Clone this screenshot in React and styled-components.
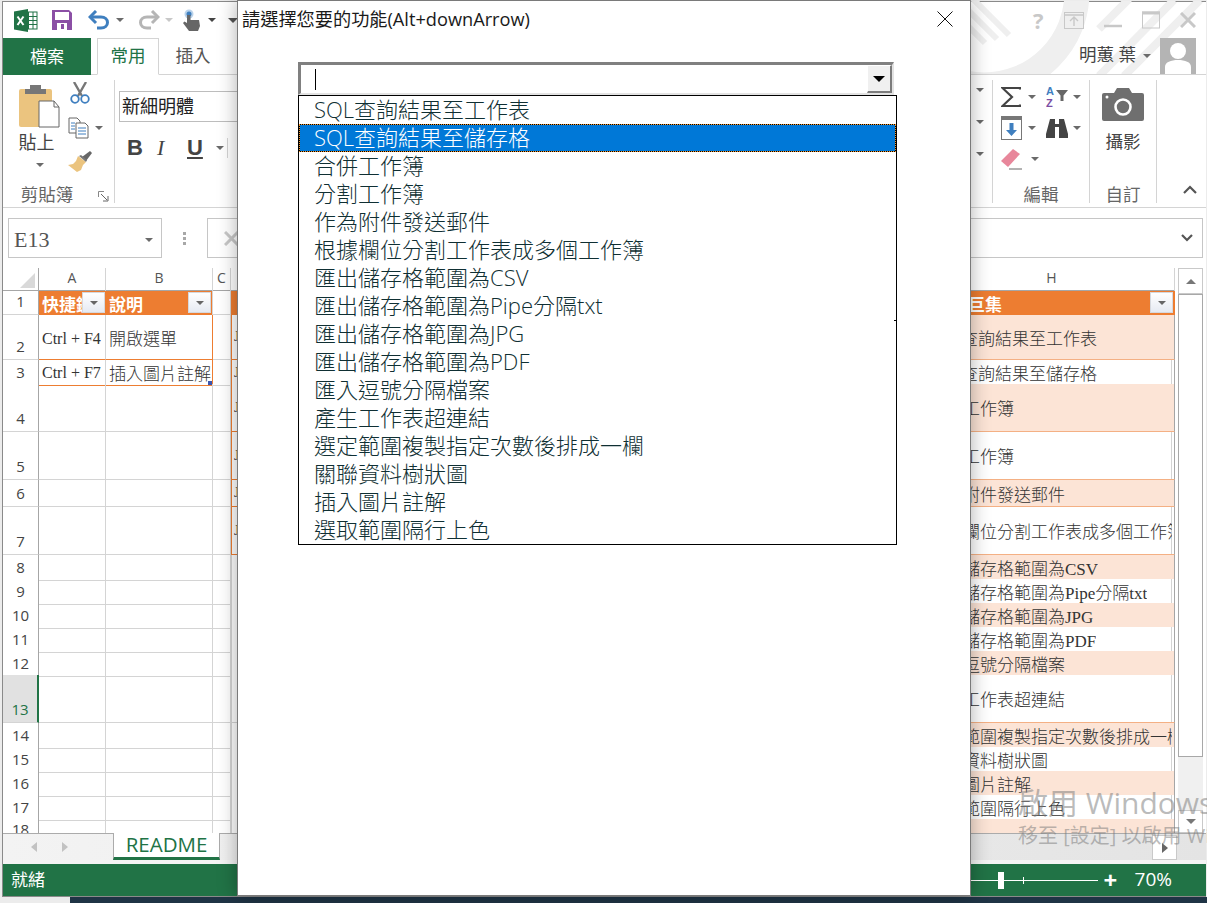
import styled, { createGlobalStyle } from 'styled-components';

const GREEN = '#217346';
const ORANGE = '#ed7d31';
const GRID = '#d4d4d4';
const SANS = '"Open Sans", "Noto Sans CJK TC", sans-serif';
const SERIF = '"Liberation Serif", "Noto Sans CJK TC", serif';

const GlobalStyle = createGlobalStyle`
  html, body { margin: 0; padding: 0; background: #ececec; }
  * { box-sizing: border-box; }
`;

const Page = styled.div`
  position: relative;
  width: 1207px;
  height: 903px;
  overflow: hidden;
  display: flex;
  flex-direction: column;
  font-family: ${SANS};
  background: #ececec;
`;

const Window = styled.div`
  margin: 1px 1px 0 2px;
  height: 896px;
  display: flex;
  flex-direction: column;
  background: #fff;
  border-top: 1px solid #8a8a8a;
  border-left: 1px solid #8a8a8a;
  border-bottom: 1px solid #8a8a8a;
`;

const Taskbar = styled.div`
  flex: 1;
  margin-left: 70px;
  background: #1f3445;
`;

/* title bar */
const TitleBar = styled.div`
  position: relative;
  height: 36px;
  display: flex;
  align-items: center;
  padding-left: 10px;
`;

const QuickItem = styled.span`
  display: inline-flex;
  align-items: center;
  margin-left: ${p => p.$ml || 0}px;
`;

const Stripes = styled.svg`
  position: absolute;
  right: 0;
  top: -1px;
`;

const WinControls = styled.div`
  position: relative;
  margin-left: auto;
  width: 173px;
  display: flex;
  align-items: center;
  justify-content: space-between;
  padding-right: 10px;
`;

const TabRow = styled.div`
  position: relative;
  height: 37px;
  display: flex;
  border-bottom: 1px solid ${GRID};
`;

const FileTab = styled.div`
  width: 88px;
  height: 37px;
  display: flex;
  align-items: center;
  justify-content: center;
  padding-bottom: 3px;
  background: ${GREEN};
  color: #fff;
  font-size: 17px;
`;

const RibbonTab = styled.div`
  height: ${p => (p.$active ? 37 : 36)}px;
  margin-left: ${p => p.$ml}px;
  width: ${p => p.$w}px;
  display: flex;
  align-items: center;
  justify-content: center;
  padding-bottom: 4px;
  font-size: 17.5px;
  color: ${p => (p.$active ? GREEN : '#555')};
  background: #fff;
  border: ${p => (p.$active ? `1px solid ${GRID}` : 'none')};
  border-bottom: ${p => (p.$active ? '1px solid #fff' : 'none')};
`;

const UserBox = styled.div`
  position: relative;
  margin-left: auto;
  display: flex;
  align-items: center;
  gap: 5px;
  padding-right: 10px;
  font-size: 17.500px;
  color: #444;
`;

const UserName = styled.span`
  padding-bottom: 5px;
`;

const Avatar = styled.svg`
  display: block;
  margin-left: 4px;
`;

const Caret = styled.span`
  display: inline-block;
  width: 0;
  height: 0;
  flex: none;
  margin-left: ${p => p.$ml || 0}px;
  border-left: ${p => p.$s || 4}px solid transparent;
  border-right: ${p => p.$s || 4}px solid transparent;
  border-top: ${p => p.$s || 4}px solid ${p => p.$c || '#6a6a6a'};
`;

const UpCaret = styled.span`
  width: 0;
  height: 0;
  border-left: 5px solid transparent;
  border-right: 5px solid transparent;
  border-bottom: 5px solid #777;
`;

/* ribbon */
const Ribbon = styled.div`
  height: 133px;
  display: flex;
  justify-content: space-between;
  padding-top: 5px;
  border-bottom: 1px solid ${GRID};
`;

const RibbonSide = styled.div`
  display: flex;
`;

const Group = styled.div`
  width: ${p => p.$w}px;
  height: 123px;
  display: flex;
  flex-direction: column;
  border-right: ${p => (p.$plain ? 'none' : `1px solid ${GRID}`)};
`;

const GroupBody = styled.div`
  flex: 1;
  display: flex;
`;

const GroupLabel = styled.div`
  height: 22px;
  font-size: 17.500px;
  line-height: 26px;
  color: #666;
  text-align: center;
  position: relative;
`;

const ClipLabel = styled.span`
  margin-right: 23px;
`;

const Launcher = styled.svg`
  position: absolute;
  right: 5px;
  top: 10px;
`;

const PasteCol = styled.div`
  margin: 4px 0 0 16px;
  width: 41px;
  display: flex;
  flex-direction: column;
  align-items: center;
  font-size: 18px;
  color: #444;
`;

const PasteLabel = styled.div`
  margin: 3px 6px 10px 0;
  line-height: 22px;
  white-space: nowrap;
`;

const SmallCol = styled.div`
  margin: 4px 0 0 8px;
  display: flex;
  flex-direction: column;
  gap: 11px;
`;

const SmallRow = styled.div`
  display: flex;
  align-items: center;
  gap: 6px;
  height: 22px;
`;

const CutWrap = styled.span`
  margin-left: 2px;
`;

const FontCol = styled.div`
  width: 100%;
  padding: 11px 0 0 4px;
`;

const FontBox = styled.div`
  width: 125px;
  height: 31px;
  display: flex;
  align-items: center;
  padding: 0 0 3px 2px;
  border: 1px solid #bdbdbd;
  background: #fff;
  font-size: 18px;
  color: #222;
  white-space: nowrap;
`;

const FontTools = styled.div`
  margin: 15px 0 0 8px;
  display: flex;
  align-items: center;
  height: 22px;
`;

const FontBtn = styled.span`
  width: 30px;
  font-size: 22px;
  font-family: ${p => (p.$serif ? '"Liberation Serif", serif' : '"Liberation Sans", sans-serif')};
  font-weight: ${p => (p.$light ? 400 : 700)};
  font-style: ${p => (p.$italic ? 'italic' : 'normal')};
  text-decoration: ${p => (p.$under ? 'underline' : 'none')};
  color: #444;
`;

const FontSep = styled.span`
  margin-left: auto;
  width: 1px;
  height: 20px;
  background: ${GRID};
`;

const CaretCol = styled.div`
  width: 100%;
  padding-top: 8px;
  display: flex;
  flex-direction: column;
  align-items: flex-end;
  gap: 28px;
  padding-right: 8px;
`;

const EditGrid = styled.div`
  padding: 4px 0 0 8px;
  display: grid;
  grid-template-columns: 45px 44px;
  grid-auto-rows: 26px;
  row-gap: 5px;
`;

const EditCell = styled.div`
  display: flex;
  align-items: center;
  gap: 5px;
`;

const CameraCol = styled.div`
  width: 100%;
  padding-top: 8px;
  display: flex;
  flex-direction: column;
  align-items: center;
  gap: 7px;
  font-size: 17.500px;
  color: #444;
`;

const CollapseCell = styled.div`
  margin-top: auto;
  padding: 0 0 4px 26px;
`;

/* formula bar */
const FormulaBar = styled.div`
  height: 60px;
  padding: 10px 3px 10px 5px;
  display: flex;
  align-items: stretch;
`;

const NameBox = styled.div`
  width: 154px;
  display: flex;
  align-items: center;
  justify-content: space-between;
  padding: 3px 8px 0 5px;
  border: 1px solid #c6c6c6;
  font-family: ${SERIF};
  font-size: 22px;
  color: #555;
`;

const Dots = styled.span`
  width: 45px;
  display: flex;
  flex-direction: column;
  align-items: center;
  justify-content: center;
  gap: 2px;
  & > i {
    width: 3px;
    height: 3px;
    background: #a8a8a8;
  }
`;

const FormulaInput = styled.div`
  flex: 1;
  display: flex;
  align-items: center;
  justify-content: space-between;
  padding: 0 9px 0 16px;
  border: 1px solid #c6c6c6;
`;

/* sheet */
const SheetArea = styled.div`
  flex: 1;
  min-height: 0;
  display: flex;
`;

const Sheet = styled.div`
  width: 1172px;
  overflow: hidden;
`;

const COLUMNS = '36px 67px 107px 18px 698px 246px';

const ColHead = styled.div`
  height: 23px;
  display: grid;
  grid-template-columns: ${COLUMNS};
  border-bottom: 1px solid #a6a6a6;
`;

const ColName = styled.div`
  display: flex;
  align-items: center;
  justify-content: center;
  padding-bottom: 4px;
  font-size: 14px;
  color: #555;
  border-right: 1px solid ${GRID};
`;

const Corner = styled(ColName)`
  border-right: 1px solid #a6a6a6;
  justify-content: flex-end;
  padding-right: 3px;
  align-items: flex-end;
  padding-bottom: 3px;
`;

const Row = styled.div`
  display: grid;
  grid-template-columns: ${COLUMNS};
  height: ${p => p.$h}px;
`;

const RowNum = styled.div`
  display: flex;
  align-items: flex-end;
  justify-content: center;
  padding-bottom: 2px;
  font-size: 15px;
  line-height: 21px;
  color: ${p => (p.$active ? GREEN : '#444')};
  background: ${p => (p.$active ? '#e1e1e1' : '#fff')};
  border-bottom: 1px solid ${GRID};
  border-right: ${p => (p.$active ? `2px solid ${GREEN}` : '1px solid #a6a6a6')};
`;

const Cell = styled.div`
  min-width: 0;
  display: flex;
  align-items: center;
  padding: ${p => p.$pt || 0}px 0 0 3px;
  font-family: ${SERIF};
  font-size: ${p => p.$fs || 17}px;
  font-weight: 300;
  color: #333;
  white-space: nowrap;
  border-bottom: 1px solid ${p => (p.$band ? ORANGE : GRID)};
  border-right: 1px solid ${p => (p.$edge ? ORANGE : GRID)};
  position: relative;
`;

const HeadCell = styled.div`
  position: relative;
  min-width: 0;
  display: flex;
  align-items: center;
  padding-left: ${p => p.$pl || 3}px;
  overflow: hidden;
  white-space: nowrap;
  background: ${ORANGE};
  color: #fff;
  font-family: ${SERIF};
  font-size: 17px;
  font-weight: 700;
  border-right: ${p => (p.$gap ? `1px solid ${GRID}` : 'none')};
`;

const FilterBtn = styled.span`
  position: absolute;
  right: ${p => p.$r || 1}px;
  top: 1px;
  width: 23px;
  height: 21px;
  display: flex;
  align-items: center;
  justify-content: center;
  background: linear-gradient(#fff, #e6eaf2);
  border: 1px solid #d5d8de;
`;

const CommentMark = styled.span`
  position: absolute;
  right: 0;
  bottom: 0;
  width: 4px;
  height: 4px;
  background: #3a55b0;
`;

const BandCell = styled.div`
  min-width: 0;
  padding-left: 2px;
  display: flex;
  align-items: center;
  font-family: ${SERIF};
  font-size: 14px;
  color: #333;
  background: #fff;
  border-left: 1px solid ${p => (p.$band ? ORANGE : GRID)};
  border-bottom: 1px solid ${p => (p.$band ? ORANGE : GRID)};
`;

const MacroCell = styled.div`
  min-width: 0;
  display: flex;
  align-items: center;
  font-family: ${SERIF};
  font-size: 17px;
  font-weight: 300;
  color: #333;
  background: ${p => (p.$tint ? '#fce4d6' : '#fff')};
  border-bottom: 1px solid ${p => (p.$line ? '#f4b084' : GRID)};
  border-right: 1px solid #a6a6a6;
  box-shadow: ${p => (p.$tint ? 'none' : `inset -2px 0 0 #fff, inset -3px 0 0 ${GRID}`)};
  padding-right: 2px;
  & > span {
    overflow: hidden;
    white-space: nowrap;
  }
`;

/* scrollbars */
const VScroll = styled.div`
  width: 25px;
  margin-left: 3px;
  display: flex;
  flex-direction: column;
  background: #f0f0f0;
`;

const ScrollBtn = styled.div`
  height: ${p => p.$h || 25}px;
  width: ${p => p.$w || 25}px;
  flex: none;
  display: flex;
  align-items: center;
  justify-content: center;
  background: #fff;
  border: 1px solid #c9c9c9;
`;

const ScrollThumb = styled.div`
  height: 463px;
  background: #fff;
  border: 1px solid #a8a8a8;
  flex: none;
`;

const ScrollTrack = styled.div`
  flex: 1;
`;

const TabStrip = styled.div`
  height: 27px;
  display: flex;
  background: linear-gradient(90deg, #f3f3f3, #e4e4e4);
  border-top: 1px solid #ababab;
`;

const SheetNav = styled.div`
  width: 110px;
  display: flex;
  align-items: center;
  gap: 25px;
  padding-left: 28px;
`;

const NavArrow = styled.span`
  width: 0;
  height: 0;
  border-top: 5px solid transparent;
  border-bottom: 5px solid transparent;
  border-${p => (p.$left ? 'right' : 'left')}: 6px solid ${p => p.$c || '#c2c2c2'};
`;

const SheetTab = styled.div`
  width: 107px;
  margin-top: -1px;
  display: flex;
  align-items: center;
  justify-content: center;
  padding-bottom: 2px;
  background: #fff;
  color: ${GREEN};
  font-size: 20.500px;
  border-left: 1px solid #ababab;
  border-right: 1px solid #ababab;
  border-bottom: 3px solid ${GREEN};
`;

const HScrollEnd = styled.div`
  margin: 1px 29px 0 auto;
  width: 25px;
  display: flex;
  align-items: center;
  justify-content: center;
  background: #fff;
  border: 1px solid #c9c9c9;
`;

const StripGap = styled.div`
  height: 4px;
  background: #f4f4f4;
`;

const StatusBar = styled.div`
  height: 32px;
  display: flex;
  align-items: center;
  background: ${GREEN};
  color: #fff;
  padding: 0 34px 3px 8px;
  font-size: 17px;
`;

const ZoomSlider = styled.div`
  position: relative;
  margin: 3px 0 0 auto;
  width: 130px;
  height: 1px;
  background: #fff;
`;

const ZoomThumb = styled.span`
  position: absolute;
  left: 30px;
  top: -8px;
  width: 6px;
  height: 17px;
  background: #fff;
`;

const ZoomTick = styled.span`
  position: absolute;
  left: 55px;
  top: -3px;
  width: 1px;
  height: 7px;
  background: #fff;
`;

const ZoomPlus = styled.span`
  margin: 2px 0 0 6px;
  width: 14px;
  font-size: 24px;
  font-weight: 700;
  line-height: 24px;
`;

const ZoomValue = styled.span`
  margin-left: 17px;
  font-size: 19px;
`;

/* activation watermark */
const Watermark = styled.div`
  position: absolute;
  left: 1018px;
  top: ${p => p.$top}px;
  font-size: ${p => p.$fs}px;
  line-height: 1.2;
  color: rgba(120, 120, 120, 0.5);
  white-space: nowrap;
  pointer-events: none;
`;

/* dialog */
const Dialog = styled.div`
  position: absolute;
  left: 237px;
  top: 0;
  width: 734px;
  height: 896px;
  background: #fff;
  border: 1px solid #7a7a7a;
  box-shadow: 0 0 18px rgba(0, 0, 0, 0.32);
  display: flex;
  flex-direction: column;
`;

const DialogHead = styled.div`
  height: 61px;
  display: flex;
  justify-content: space-between;
  padding: 6px 17px 0 4px;
  font-size: 18.200px;
  line-height: 25px;
  color: #1a1a1a;
`;

const CloseIcon = styled.svg`
  margin-top: 4px;
`;

const Combo = styled.div`
  width: 596px;
  height: 33px;
  margin-left: 60px;
  display: flex;
  align-items: center;
  justify-content: space-between;
  border-top: 3px solid #808080;
  border-left: 3px solid #808080;
  border-right: 2px solid #e3e3e3;
  border-bottom: 2px solid #e3e3e3;
`;

const TextCaret = styled.span`
  width: 1px;
  height: 21px;
  margin-left: 14px;
  background: #000;
`;

const ComboBtn = styled.span`
  width: 25px;
  height: 100%;
  display: flex;
  align-items: center;
  justify-content: center;
  background: #f0f0f0;
  border-top: 1px solid #fff;
  border-left: 1px solid #fff;
  border-right: 2px solid #7c7c7c;
  border-bottom: 2px solid #7c7c7c;
`;

const OptionList = styled.ul`
  position: relative;
  width: 599px;
  margin: 0 0 0 60px;
  padding: 0;
  list-style: none;
  border: 1px solid #000;
  &::after {
    content: '';
    position: absolute;
    right: 0;
    top: 224px;
    width: 2px;
    height: 1px;
    background: #000;
  }
`;

const Option = styled.li`
  height: 28px;
  font-size: 22px;
  font-weight: 300;
  line-height: ${p => (p.$selected ? 25 : 27)}px;
  white-space: nowrap;
  color: ${p => (p.$selected ? '#fff' : '#0f2f33')};
  border: ${p => (p.$selected ? '1px dotted #f2962c' : 'none')};
  padding-left: ${p => (p.$selected ? 14 : 15)}px;
  background: ${p => (p.$selected ? 'linear-gradient(#0078d7, #0078d7) padding-box, #000' : 'transparent')};
`;

const OPTIONS = [
  'SQL查詢結果至工作表',
  'SQL查詢結果至儲存格',
  '合併工作簿',
  '分割工作簿',
  '作為附件發送郵件',
  '根據欄位分割工作表成多個工作簿',
  '匯出儲存格範圍為CSV',
  '匯出儲存格範圍為Pipe分隔txt',
  '匯出儲存格範圍為JPG',
  '匯出儲存格範圍為PDF',
  '匯入逗號分隔檔案',
  '產生工作表超連結',
  '選定範圍複製指定次數後排成一欄',
  '關聯資料樹狀圖',
  '插入圖片註解',
  '選取範圍隔行上色',
];

const ROW_HEIGHTS = [45, 24, 48, 48, 27, 48, 24, 24, 24, 24, 24, 48, 24, 24, 24, 24, 24];

function ExcelLogo() {
  return (
    <svg width="25" height="25" viewBox="0 0 25 25">
      <rect x="11" y="4" width="13" height="17" fill="#fff" stroke={GREEN} />
      <path d="M11 8.500h13M11 12.500h13M11 16.500h13M15.500 4v17M20 4v17" stroke={GREEN} fill="none" />
      <path d="M1 3.500 15 1v23L1 21.500z" fill={GREEN} />
      <path d="M4.500 8.500 10.500 17M10.500 8.500 4.500 17" stroke="#fff" strokeWidth="2" />
    </svg>
  );
}

function SaveIcon() {
  return (
    <svg width="20" height="20" viewBox="0 0 20 20">
      <path d="M0 0h17l3 3v17H0z" fill="#8b4fa5" />
      <rect x="3" y="2" width="14" height="8" fill="#fff" />
      <rect x="5" y="13" width="10" height="7" fill="#fff" />
      <rect x="9" y="14" width="3" height="5" fill="#8b4fa5" />
    </svg>
  );
}

const FlipX = styled.span`
  display: inline-flex;
  transform: scaleX(-1);
`;

function UndoIcon({ color }) {
  return (
    <svg width="22" height="20" viewBox="0 0 22 20">
      <path d="M3 7h10c4 0 6.500 2.500 6.500 5.500S17 18 13 18H9" fill="none" stroke={color} strokeWidth="3" />
      <path d="M8 1 2 7l6 6" fill="none" stroke={color} strokeWidth="3" />
    </svg>
  );
}

function TouchIcon() {
  return (
    <svg width="18" height="22" viewBox="0 0 18 22">
      <circle cx="6" cy="5" r="4.500" fill="#b9d2ea" />
      <circle cx="6" cy="5" r="2.500" fill="#3f7fbf" />
      <path d="M4 6h3.500v5h8.500l1 6-2 5H6L0 14l1.500-1.500L4 14z" fill="#666" />
    </svg>
  );
}

function PasteIcon() {
  return (
    <svg width="41" height="44" viewBox="0 0 41 44">
      <rect x="0" y="5" width="33" height="38" rx="2" fill="#ebc47f" />
      <path d="M6 5h5V1h11v4h5v5H6z" fill="#777" />
      <path d="M20 17h15l5 6v20H20z" fill="#fff" stroke="#666" />
      <path d="M35 17v6h5" fill="none" stroke="#666" />
    </svg>
  );
}

function CutIcon() {
  return (
    <svg width="20" height="22" viewBox="0 0 20 22">
      <path d="M4 0l8 14M16 0 8 14" stroke="#777" strokeWidth="2.400" fill="none" />
      <circle cx="5" cy="17" r="3.800" fill="#fff" stroke="#3f7fbf" strokeWidth="1.800" />
      <circle cx="15" cy="17" r="3.800" fill="#fff" stroke="#3f7fbf" strokeWidth="1.800" />
    </svg>
  );
}

function CopyIcon() {
  return (
    <svg width="21" height="22" viewBox="0 0 21 22">
      <path d="M1 1h8l3 3v12H1z" fill="#fff" stroke="#666" />
      <path d="M8 6h9l3 3v12H8z" fill="#fff" stroke="#666" />
      <path d="M3 6h4M3 9h4M3 12h4" stroke="#3f7fbf" />
      <path d="M10 11h8M10 14h8M10 17h8" stroke="#3f7fbf" />
    </svg>
  );
}

function BrushIcon() {
  return (
    <svg width="24" height="22" viewBox="0 0 24 22">
      <path d="M14 7 22 1l2 2-6 8z" fill="#666" />
      <path d="M10 6l8 6-3 3-2 5-4 2-9-7 5-1 3-3z" fill="#ebc47f" />
      <path d="M11 6l2-1 6 5-1 2z" fill="#777" />
    </svg>
  );
}

function SigmaIcon() {
  return (
    <svg width="20" height="20" viewBox="0 0 20 20">
      <path d="M19 2.500V1H1.500L11 10 1.500 19H19v-1.500" fill="none" stroke="#444" strokeWidth="2.200" />
    </svg>
  );
}

function SortIcon() {
  return (
    <svg width="22" height="24" viewBox="0 0 22 24">
      <text x="0" y="10" fontSize="11" fontWeight="700" fontFamily="Liberation Sans" fill="#3f7fbf">A</text>
      <text x="0" y="22" fontSize="11" fontWeight="700" fontFamily="Liberation Sans" fill="#7b4ea3">Z</text>
      <path d="M10 5h12l-4.500 5.500V16l-3 0v-5.500z" fill="#666" />
    </svg>
  );
}

function FillIcon() {
  return (
    <svg width="22" height="24" viewBox="0 0 22 24">
      <rect x="0.500" y="0.500" width="20" height="23" fill="#fff" stroke="#777" />
      <rect x="0" y="0" width="21" height="4" fill="#777" />
      <path d="M8.500 7h4v7H16l-5.500 6L5 14h3.500z" fill="#3f7fbf" />
    </svg>
  );
}

function BinocularsIcon() {
  return (
    <svg width="22" height="20" viewBox="0 0 22 20">
      <path d="M4 1h5v5h4V1h5l4 15v4h-9V9H9v11H0v-4z" fill="#444" />
    </svg>
  );
}

function EraserIcon() {
  return (
    <svg width="25" height="21" viewBox="0 0 25 21">
      <path d="M0 12 12 0l7 5L7 18z" fill="#e8879b" />
      <path d="M8 20h13" stroke="#666" />
    </svg>
  );
}

function CameraIcon() {
  return (
    <svg width="42" height="33" viewBox="0 0 42 33">
      <path d="M2 5h10l3-5h12l3 5h10a2 2 0 0 1 2 2v24a2 2 0 0 1-2 2H2a2 2 0 0 1-2-2V7a2 2 0 0 1 2-2z" fill="#6f6f6f" />
      <circle cx="21" cy="19" r="7.500" fill="none" stroke="#fff" strokeWidth="2.600" />
      <circle cx="5" cy="9" r="1.500" fill="#fff" />
    </svg>
  );
}

function FormulaChevron() {
  return (
    <svg width="12" height="8" viewBox="0 0 12 8">
      <path d="M1 1l5 5 5-5" fill="none" stroke="#555" strokeWidth="2.200" />
    </svg>
  );
}

function TitleStripes() {
  return (
    <Stripes width="237" height="73" viewBox="0 0 237 73">
      <g fill="none" stroke="#efefef">
        <circle cx="15" cy="-9" r="93" strokeWidth="25" />
        <path d="M130 75 205-1M155 75 231-1M130 28 160-2" strokeWidth="8" />
        <path d="M0 10 28 38M0-6 40 34M0 26 16 42" strokeWidth="6" />
      </g>
    </Stripes>
  );
}

const HelpMark = styled.span`
  color: #c8c8c8;
  font-size: 22px;
  font-weight: 700;
`;

function WindowButtons() {
  return (
    <WinControls>
      <HelpMark>?</HelpMark>
      <svg width="20" height="17" viewBox="0 0 20 17">
        <rect x="0.500" y="0.500" width="19" height="16" fill="none" stroke="#c8c8c8" />
        <path d="M0 3h20M10 14V6M6 9l4-4 4 4" fill="none" stroke="#c8c8c8" strokeWidth="1.400" />
      </svg>
      <svg width="18" height="17" viewBox="0 0 18 17">
        <path d="M0 14h18" stroke="#c8c8c8" strokeWidth="2.500" />
      </svg>
      <svg width="18" height="18" viewBox="0 0 18 18">
        <rect x="0.500" y="1" width="17" height="16" fill="none" stroke="#c8c8c8" />
        <path d="M0 2h18" stroke="#c8c8c8" strokeWidth="3" />
      </svg>
      <svg width="16" height="16" viewBox="0 0 16 16">
        <path d="M1 1l14 14M15 1 1 15" stroke="#c8c8c8" strokeWidth="3" />
      </svg>
    </WinControls>
  );
}

function FilterButton({ right }) {
  return (
    <FilterBtn $r={right}>
      <Caret $s={4} $c="#666" />
    </FilterBtn>
  );
}

function SheetRow({ index, height }) {
  const n = index + 2;
  const tinted = n % 2 === 0;
  const band = n <= 7;
  return (
    <Row $h={height}>
      <RowNum $active={n === 13}>{n}</RowNum>
      <Cell $fs={16} $pt={n === 2 ? 3 : 1} $band={n <= 3}>
        {n === 2 && 'Ctrl + F4'}
        {n === 3 && 'Ctrl + F7'}
      </Cell>
      <Cell $band={n <= 3} $edge={n <= 3}>
        {n === 2 && '開啟選單'}
        {n === 3 && '插入圖片註解'}
        {n === 3 && <CommentMark />}
      </Cell>
      <Cell />
      <BandCell $band={band}>{band && 'J'}</BandCell>
      <MacroCell $tint={tinted} $line>
        <span>{OPTIONS[index]}</span>
      </MacroCell>
    </Row>
  );
}

export default function App() {
  return (
    <Page>
      <GlobalStyle />
      <Window>
        <TitleBar>
          <TitleStripes />
          <ExcelLogo />
          <QuickItem $ml={14}><SaveIcon /></QuickItem>
          <QuickItem $ml={16}><UndoIcon color="#3f7fbf" /><Caret $ml={6} /></QuickItem>
          <QuickItem $ml={14}><FlipX><UndoIcon color="#b5b5b5" /></FlipX><Caret $ml={5} $c="#c8c8c8" /></QuickItem>
          <QuickItem $ml={10}><TouchIcon /><Caret $ml={7} $c="#444" /></QuickItem>
          <QuickItem $ml={12}><Caret $s={5} $c="#555" /></QuickItem>
          <WindowButtons />
        </TitleBar>

        <TabRow>
          <FileTab>檔案</FileTab>
          <RibbonTab $ml={6} $w={62} $active>常用</RibbonTab>
          <RibbonTab $ml={0} $w={68}>插入</RibbonTab>
          <UserBox>
            <UserName>明蕙 葉</UserName>
            <Caret $ml={2} />
            <Avatar width="36" height="36" viewBox="0 0 36 36">
              <rect width="36" height="36" fill="#b4b4b4" />
              <circle cx="18" cy="13" r="8" fill="#fff" />
              <path d="M5 36v-7c0-5 6-7 13-7s13 2 13 7v7z" fill="#fff" />
            </Avatar>
          </UserBox>
        </TabRow>

        <Ribbon>
          <RibbonSide>
            <Group $w={112}>
              <GroupBody>
                <PasteCol>
                  <PasteIcon />
                  <PasteLabel>貼上</PasteLabel>
                  <Caret />
                </PasteCol>
                <SmallCol>
                  <SmallRow><CutWrap><CutIcon /></CutWrap></SmallRow>
                  <SmallRow><CopyIcon /><Caret /></SmallRow>
                  <SmallRow><BrushIcon /></SmallRow>
                </SmallCol>
              </GroupBody>
              <GroupLabel>
                <ClipLabel>剪貼簿</ClipLabel>
                <Launcher width="11" height="11" viewBox="0 0 11 11">
                  <path d="M0.500 6V0.500H6" fill="none" stroke="#888" />
                  <path d="M3 3l6 6M5 10h5V5" fill="none" stroke="#666" />
                </Launcher>
              </GroupLabel>
            </Group>
            <Group $w={113} $plain>
              <FontCol>
                <FontBox>新細明體</FontBox>
                <FontTools>
                  <FontBtn>B</FontBtn>
                  <FontBtn $serif $italic $light>I</FontBtn>
                  <FontBtn $under>U</FontBtn>
                  <Caret $ml={-1} />
                  <FontSep />
                </FontTools>
              </FontCol>
            </Group>
          </RibbonSide>
          <RibbonSide>
            <Group $w={22}>
              <CaretCol>
                <Caret />
                <Caret />
                <Caret />
              </CaretCol>
            </Group>
            <Group $w={97}>
              <EditGrid>
                <EditCell><SigmaIcon /><Caret $ml={2} /></EditCell>
                <EditCell><SortIcon /><Caret /></EditCell>
                <EditCell><FillIcon /><Caret /></EditCell>
                <EditCell><BinocularsIcon /><Caret /></EditCell>
                <EditCell><EraserIcon /><Caret /></EditCell>
              </EditGrid>
              <GroupBody />
              <GroupLabel>編輯</GroupLabel>
            </Group>
            <Group $w={67}>
              <CameraCol>
                <CameraIcon />
                攝影
              </CameraCol>
              <GroupBody />
              <GroupLabel>自訂</GroupLabel>
            </Group>
            <Group $w={49} $plain>
              <CollapseCell>
                <svg width="14" height="9" viewBox="0 0 14 9">
                  <path d="M1 8l6-6 6 6" fill="none" stroke="#555" strokeWidth="2.200" />
                </svg>
              </CollapseCell>
            </Group>
          </RibbonSide>
        </Ribbon>

        <FormulaBar>
          <NameBox>
            E13
            <Caret />
          </NameBox>
          <Dots><i /><i /><i /></Dots>
          <FormulaInput>
            <svg width="15" height="15" viewBox="0 0 15 15">
              <path d="M1 1l13 13M14 1 1 14" stroke="#c8c8c8" strokeWidth="3" />
            </svg>
            <FormulaChevron />
          </FormulaInput>
        </FormulaBar>

        <SheetArea>
          <Sheet>
            <ColHead>
              <Corner>
                <svg width="15" height="15" viewBox="0 0 15 15">
                  <path d="M15 0v15H0z" fill="#d9d9d9" />
                </svg>
              </Corner>
              <ColName>A</ColName>
              <ColName>B</ColName>
              <ColName>C</ColName>
              <ColName />
              <ColName>H</ColName>
            </ColHead>
            <Row $h={24}>
              <RowNum>1</RowNum>
              <HeadCell>快捷鍵<FilterButton /></HeadCell>
              <HeadCell $gap>說明<FilterButton /></HeadCell>
              <Cell />
              <HeadCell />
              <HeadCell $pl={39}>
                巨集
                <FilterButton right={2} />
              </HeadCell>
            </Row>
            {ROW_HEIGHTS.map((h, i) => (
              <SheetRow key={i} index={i} height={h} />
            ))}
            <Row $h={24}>
              <RowNum>18</RowNum>
              <Cell />
              <Cell />
              <Cell />
              <BandCell />
              <MacroCell />
            </Row>
          </Sheet>
          <VScroll>
            <ScrollBtn $h={26}><UpCaret /></ScrollBtn>
            <ScrollThumb />
            <ScrollTrack />
            <ScrollBtn $h={23}><Caret $s={5} $c="#777" /></ScrollBtn>
          </VScroll>
        </SheetArea>

        <TabStrip>
          <SheetNav>
            <NavArrow $left />
            <NavArrow />
          </SheetNav>
          <SheetTab>README</SheetTab>
          <HScrollEnd><NavArrow $c="#666" /></HScrollEnd>
        </TabStrip>
        <StripGap />
        <StatusBar>
          就緒
          <ZoomSlider>
            <ZoomThumb />
            <ZoomTick />
          </ZoomSlider>
          <ZoomPlus>+</ZoomPlus>
          <ZoomValue>70%</ZoomValue>
        </StatusBar>
      </Window>
      <Taskbar />

      <Watermark $top={785} $fs={30}>啟用 Windows</Watermark>
      <Watermark $top={824} $fs={20}>移至 [設定] 以啟用 Windows</Watermark>

      <Dialog>
        <DialogHead>
          請選擇您要的功能(Alt+downArrow)
          <CloseIcon width="16" height="16" viewBox="0 0 16 16">
            <path d="M0.500 0.500l15 15M15.500 0.500l-15 15" stroke="#111" fill="none" />
          </CloseIcon>
        </DialogHead>
        <Combo>
          <TextCaret />
          <ComboBtn><Caret $s={6} $c="#000" /></ComboBtn>
        </Combo>
        <OptionList>
          {OPTIONS.map((o, i) => (
            <Option key={o} $selected={i === 1}>{o}</Option>
          ))}
        </OptionList>
      </Dialog>
    </Page>
  );
}
